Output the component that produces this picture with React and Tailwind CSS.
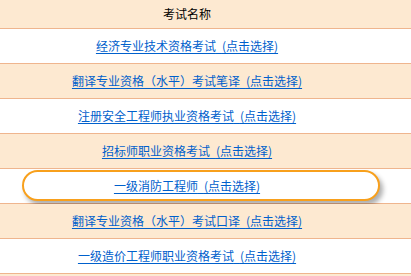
const exams = [
  '经济专业技术资格考试',
  '翻译专业资格（水平）考试笔译',
  '注册安全工程师执业资格考试',
  '招标师职业资格考试',
  '一级消防工程师',
  '翻译专业资格（水平）考试口译',
  '一级造价工程师职业资格考试',
];

const App = () => {
  return (
    <div
      className="w-[411px] h-[276px] overflow-hidden bg-white text-[12px] leading-none"
      style={{ fontFamily: '"Noto Sans CJK SC", "Liberation Sans", sans-serif' }}
    >
      <div className="h-[29px] bg-[#fde9d1] border-b border-[#efb58e] flex items-center justify-center pr-[37px] text-black">
        考试名称
      </div>
      {exams.map((name, i) => (
        <div
          key={i}
          className={
            'relative h-[35px] border-b border-[#efb58e] flex items-center justify-center pr-[37px] ' +
            (i % 2 === 0 ? 'bg-white' : 'bg-[#fde9d1]')
          }
        >
          {i === 4 && (
            <div className="absolute left-[22px] top-[1px] w-[358px] h-[31px] rounded-full border-2 border-[#f8a01c] bg-white shadow-[3px_4px_5px_rgba(0,0,0,0.32)]" />
          )}
          <a href="#" className="relative text-[#0060cc] underline underline-offset-2">
            {name}{'\u2002'}(点击选择)
          </a>
        </div>
      ))}
      <div className="h-[10px] bg-[#fde9d1]" />
    </div>
  );
};

export default App;
